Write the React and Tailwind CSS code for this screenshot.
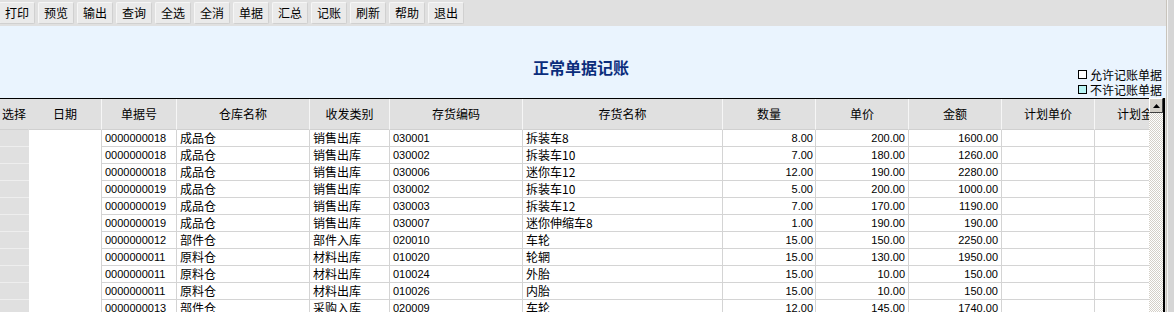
import React from "react";

const btns = ["打印","预览","输出","查询","全选","全消","单据","汇总","记账","刷新","帮助","退出"];
const headers = ["选择","日期","单据号","仓库名称","收发类别","存货编码","存货名称","数量","单价","金额","计划单价","计划金额"];
const rows = [
  ["0000000018","成品仓","销售出库","030001","拆装车8","8.00","200.00","1600.00"],
  ["0000000018","成品仓","销售出库","030002","拆装车10","7.00","180.00","1260.00"],
  ["0000000018","成品仓","销售出库","030006","迷你车12","12.00","190.00","2280.00"],
  ["0000000019","成品仓","销售出库","030002","拆装车10","5.00","200.00","1000.00"],
  ["0000000019","成品仓","销售出库","030003","拆装车12","7.00","170.00","1190.00"],
  ["0000000019","成品仓","销售出库","030007","迷你伸缩车8","1.00","190.00","190.00"],
  ["0000000012","部件仓","部件入库","020010","车轮","15.00","150.00","2250.00"],
  ["0000000011","原料仓","材料出库","010020","轮辋","15.00","130.00","1950.00"],
  ["0000000011","原料仓","材料出库","010024","外胎","15.00","10.00","150.00"],
  ["0000000011","原料仓","材料出库","010026","内胎","15.00","10.00","150.00"],
  ["0000000013","部件仓","采购入库","020009","车轮","12.00","145.00","1740.00"],
];

const cjk = "font-['Noto_Sans_CJK_SC',sans-serif]";
const num = "font-['Liberation_Sans','Noto_Sans_CJK_SC',sans-serif] text-[11px]";
const grid = "grid grid-cols-[29px_73px_75px_133px_80px_133px_200px_93px_93px_93px_93px_93px] w-[1188px]";

export default function App() {
  return (
    <div className={`flex w-[1174px] h-[312px] overflow-hidden bg-white text-black ${cjk} text-[12px]`}>
      <div className="flex flex-col w-[1166px] shrink-0">
        {/* toolbar */}
        <div className="flex items-center h-[26px] bg-[#e0e0e0] gap-[3px] -ml-[1px] shrink-0">
          {btns.map((b) => (
            <div
              key={b}
              className="w-[36px] h-[22px] flex items-center justify-center rounded-[2px] bg-[#eaeaea] border border-t-[#f6f6f6] border-l-[#f6f6f6] border-r-[#d0d0d0] border-b-[#d0d0d0] leading-none text-[12px]"
            >
              {b}
            </div>
          ))}
        </div>
        {/* title area */}
        <div className="grid grid-cols-[1fr_auto_1fr] h-[72px] bg-[#eaf4fe] shrink-0">
          <div />
          <div className="flex items-center pt-[10px] pr-[4px] text-[16px] font-bold text-[#0b2d7c] leading-none">
            正常单据记账
          </div>
          <div className="flex flex-col items-end justify-end pb-[1px] pr-[4px]">
            <div className="flex items-center gap-[3px] h-[15px] leading-none">
              <span className="w-[9px] h-[9px] border border-black bg-white" />
              <span>允许记账单据</span>
            </div>
            <div className="flex items-center gap-[3px] h-[15px] leading-none">
              <span className="w-[9px] h-[9px] border border-black bg-[#b8f4f4]" />
              <span>不许记账单据</span>
            </div>
          </div>
        </div>
        {/* table area */}
        <div className="flex flex-1 min-h-0">
          <div className="w-[1149px] overflow-hidden border-t border-black shrink-0">
            <div className={`${grid} h-[31px] bg-[#e0e0e0]`}>
              {headers.map((h, i) => (
                <div
                  key={h}
                  className={`flex items-center justify-center border-b border-[#d0d0d0] ${i === 0 ? "border-r border-r-[#e0e0e0]" : "border-r border-r-[#f6f6f6]"} leading-none whitespace-nowrap`}
                >
                  {h}
                </div>
              ))}
            </div>
            {rows.map((r, ri) => (
              <div key={ri} className={`${grid} h-[17px]`}>
                <div className="bg-[#e0e0e0] border-b border-[#eeeeee]" />
                <div className="bg-white border-r border-[#d4d4d4]" />
                <div className={`border-r border-b border-[#d4d4d4] pl-[3px] leading-[16px] ${num}`}>{r[0]}</div>
                <div className="border-r border-b border-[#d4d4d4] pl-[3px] leading-[16px]">{r[1]}</div>
                <div className="border-r border-b border-[#d4d4d4] pl-[3px] leading-[16px]">{r[2]}</div>
                <div className={`border-r border-b border-[#d4d4d4] pl-[3px] leading-[16px] ${num}`}>{r[3]}</div>
                <div className="border-r border-b border-[#d4d4d4] pl-[3px] leading-[16px] whitespace-nowrap">{r[4]}</div>
                <div className={`border-r border-b border-[#d4d4d4] pr-[2px] text-right leading-[16px] ${num}`}>{r[5]}</div>
                <div className={`border-r border-b border-[#d4d4d4] pr-[3px] text-right leading-[16px] ${num}`}>{r[6]}</div>
                <div className={`border-r border-b border-[#d4d4d4] pr-[3px] text-right leading-[16px] ${num}`}>{r[7]}</div>
                <div className="border-r border-b border-[#d4d4d4]" />
                <div className="border-r border-b border-[#d4d4d4]" />
              </div>
            ))}
          </div>
          {/* scrollbar */}
          <div className="flex flex-col w-[14px] shrink-0 bg-[repeating-conic-gradient(#d4d0c8_0_25%,#ffffff_0_50%)] bg-[length:2px_2px]">
            <div className="h-[15px] bg-[#d4d0c8] border border-t-white border-l-white border-r-[#404040] border-b-[#404040] flex items-center justify-center">
              <svg width="7" height="4" viewBox="0 0 7 4"><path d="M3.5 0 L7 4 L0 4 Z" fill="#000" /></svg>
            </div>
          </div>
          <div className="w-[2px] bg-black shrink-0" />
          <div className="w-[1px] bg-[#e0e0e0] shrink-0" />
        </div>
      </div>
      {/* right edge */}
      <div className="flex shrink-0 w-[8px]">
        <div className="w-[1px] bg-[#c8c4bc]" />
        <div className="w-[1px] bg-[#f4f4f4]" />
        <div className="flex-1 bg-[#d6d6d6]" />
      </div>
    </div>
  );
}
